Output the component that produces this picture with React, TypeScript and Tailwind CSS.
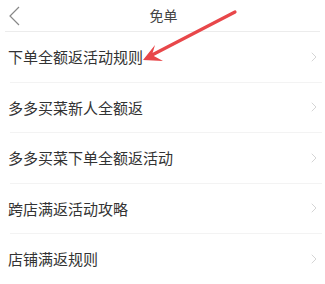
import { ChevronRight } from 'lucide-react';

const items = [
  '下单全额返活动规则',
  '多多买菜新人全额返',
  '多多买菜下单全额返活动',
  '跨店满返活动攻略',
  '店铺满返规则',
];

export default function App() {
  return (
    <div
      className="relative w-[325px] h-[284px] overflow-hidden bg-white text-[#333]"
      style={{ fontFamily: '"Noto Sans CJK SC", "Noto Sans", sans-serif' }}
    >
      <div className="flex items-center h-[32px] mx-[5px] border-b border-[#ececec]">
        <svg width="14" height="22" viewBox="0 0 14 22" className="ml-[2px]">
          <polyline points="12,2 3,11 12,20" fill="none" stroke="#888" strokeWidth="1.2" />
        </svg>
        <div className="flex-1 text-center text-[14px] pr-[14px] text-[#444]">免单</div>
      </div>

      <div className="flex flex-col">
        {items.map((label) => (
          <div
            key={label}
            className="flex items-center h-[50.5px] ml-[10px] mr-[3px] border-b border-[#f3f3f3]"
          >
            <span className="flex-1 text-[15px] -ml-[2px] leading-none">{label}</span>
            <ChevronRight className="w-[16px] h-[16px] text-[#d2d2d2]" strokeWidth={1.4} />
          </div>
        ))}
      </div>

      {/* annotation arrow */}
      <svg className="absolute left-0 top-0 pointer-events-none" width="325" height="284">
        <line x1="235" y1="12" x2="152" y2="55" stroke="#e8474a" strokeWidth="3.2" strokeLinecap="round" />
        <polygon points="143,60 155,45 152,55 163,61" fill="#e8474a" />
      </svg>
    </div>
  );
}
